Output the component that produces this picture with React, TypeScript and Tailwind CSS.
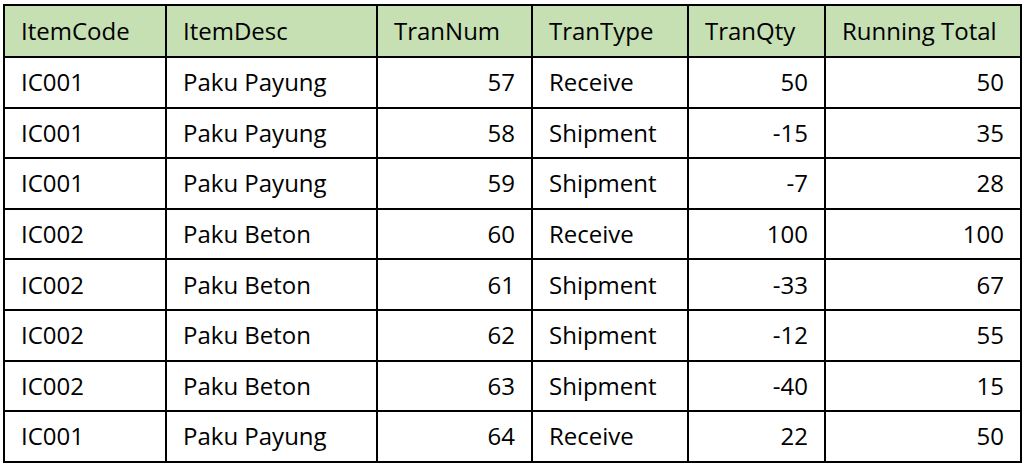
const rows = [
  ['IC001', 'Paku Payung', 57, 'Receive', 50, 50],
  ['IC001', 'Paku Payung', 58, 'Shipment', -15, 35],
  ['IC001', 'Paku Payung', 59, 'Shipment', -7, 28],
  ['IC002', 'Paku Beton', 60, 'Receive', 100, 100],
  ['IC002', 'Paku Beton', 61, 'Shipment', -33, 67],
  ['IC002', 'Paku Beton', 62, 'Shipment', -12, 55],
  ['IC002', 'Paku Beton', 63, 'Shipment', -40, 15],
  ['IC001', 'Paku Payung', 64, 'Receive', 22, 50],
];

const headers = ['ItemCode', 'ItemDesc', 'TranNum', 'TranType', 'TranQty', 'Running Total'];

export default function App() {
  return (
    <div className="w-[1024px] h-[468px] bg-white pl-[3px] pt-[4px] font-['Open_Sans',sans-serif] text-[24px] text-black">
      <table className="table-fixed border-collapse w-[1017px]">
        <colgroup>
          <col className="w-[162px]" />
          <col className="w-[211px]" />
          <col className="w-[155px]" />
          <col className="w-[156px]" />
          <col className="w-[137px]" />
          <col className="w-[196px]" />
        </colgroup>
        <thead>
          <tr className="h-[52px] bg-[#c6e0b4]">
            {headers.map((h) => (
              <th key={h} className="border-2 border-black px-4 font-normal text-left whitespace-nowrap">
                {h}
              </th>
            ))}
          </tr>
        </thead>
        <tbody>
          {rows.map((r, idx) => (
            <tr key={idx} className="h-[50.6px]">
              <td className="border-2 border-black px-4 text-left">{r[0]}</td>
              <td className="border-2 border-black px-4 text-left">{r[1]}</td>
              <td className="border-2 border-black px-4 text-right">{r[2]}</td>
              <td className="border-2 border-black px-4 text-left">{r[3]}</td>
              <td className="border-2 border-black px-4 text-right">{r[4]}</td>
              <td className="border-2 border-black px-4 text-right">{r[5]}</td>
            </tr>
          ))}
        </tbody>
      </table>
    </div>
  );
}
